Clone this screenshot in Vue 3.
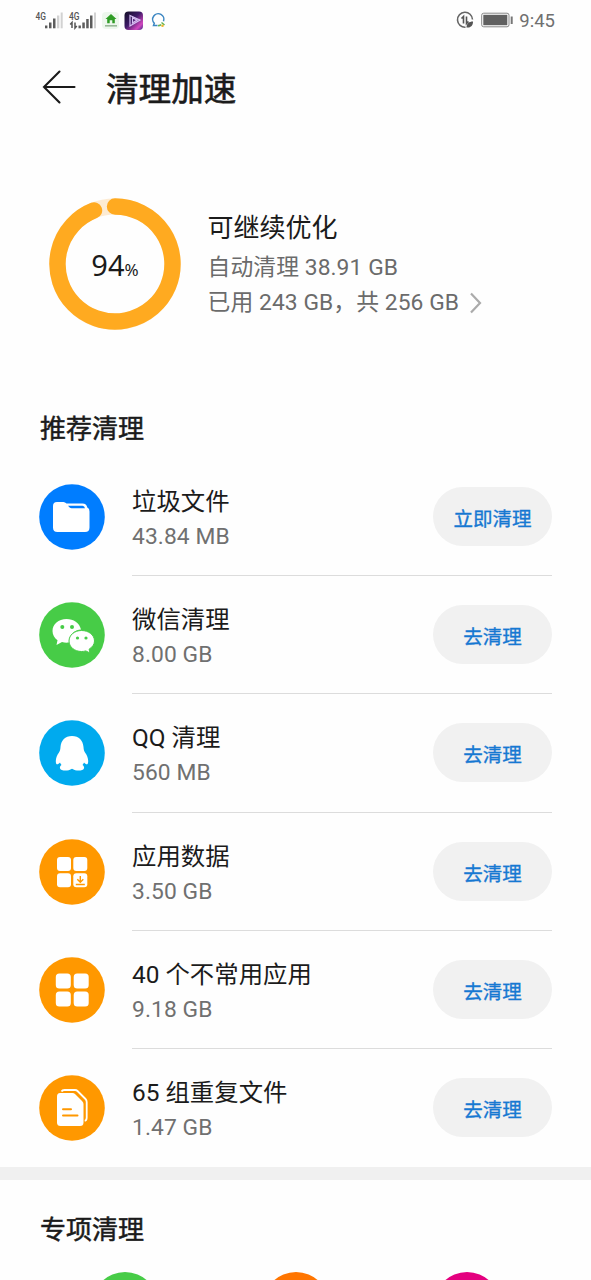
<script setup>
const rows = [
  { icon: 'folder', color: '#007dff', name: '垃圾文件', size: '43.84 MB', action: '立即清理' },
  { icon: 'wechat', color: '#47cc47', name: '微信清理', size: '8.00 GB', action: '去清理' },
  { icon: 'qq', color: '#00aaee', name: 'QQ 清理', size: '560 MB', action: '去清理' },
  { icon: 'data', color: '#ff9800', name: '应用数据', size: '3.50 GB', action: '去清理' },
  { icon: 'apps', color: '#ff9800', name: '40 个不常用应用', size: '9.18 GB', action: '去清理' },
  { icon: 'files', color: '#ff9800', name: '65 组重复文件', size: '1.47 GB', action: '去清理' },
]
const specials = ['green', 'orange', 'pink']
</script>

<template>
  <div class="page">
    <header class="status">
      <svg class="status-left" width="140" height="24" viewBox="0 0 140 24">
        <g class="net">
          <text x="0.500" y="10.500" textLength="10.500" lengthAdjust="spacingAndGlyphs">4G</text>
          <text x="34" y="10.500" textLength="10.500" lengthAdjust="spacingAndGlyphs">4G</text>
        </g>
        <g fill="#5c5c5c">
          <rect x="10" y="16.500" width="2.400" height="2.800" />
          <rect x="14" y="13.500" width="2.500" height="5.800" />
          <rect x="18" y="9.500" width="2.500" height="9.800" />
          <rect x="43.500" y="16.500" width="2.400" height="2.800" />
          <rect x="47.300" y="13.500" width="2.500" height="5.800" />
          <rect x="51.200" y="10" width="2.500" height="9.300" />
          <rect x="55" y="6.500" width="2.500" height="12.800" />
        </g>
        <g fill="#d2d2d2">
          <rect x="22" y="6.500" width="2.300" height="12.800" />
          <rect x="25.700" y="3.500" width="2" height="15.800" />
          <rect x="59" y="3.500" width="2" height="15.800" />
        </g>
        <path d="M37 19v-5.500l-1.800 2M40 13.500V19l1.800-2" fill="none" stroke="#555" stroke-width="1.500" />
        <rect x="67" y="3" width="17" height="17" rx="4" fill="#edf7ed" />
        <path d="M76 5l-5.500 5h1.700v4.300h2.500v-3h2.600v3h2.500v-4.300h1.700z" fill="#2f9c25" />
        <rect x="70" y="16" width="12" height="1.600" fill="#98b898" />
        <defs>
          <linearGradient id="media" x1="0" y1="0" x2="1" y2="1">
            <stop offset="0" stop-color="#120e24" />
            <stop offset="0.450" stop-color="#3c1a66" />
            <stop offset="0.800" stop-color="#d348c0" />
            <stop offset="1" stop-color="#3a2886" />
          </linearGradient>
        </defs>
        <rect x="89.500" y="2.500" width="18.500" height="18.500" rx="4" fill="url(#media)" />
        <path d="M95 6.500l10 4.500-10 6z M97.500 9v5l4.500-3z" fill="none" stroke="#d8c2f5" stroke-width="1.200" />
        <path d="M122.500 16.500h-4l.8-2.200a5.600 5.600 0 1 1 9.200-2" fill="none" stroke="#3b86c2" stroke-width="1.500" />
        <path d="M123 16.500q2 .5 3-1M126.500 13.500l3 2.500" fill="none" stroke="#63b551" stroke-width="1.500" />
        <circle cx="127.500" cy="16.800" r="1.300" fill="#efb52f" />
      </svg>
      <div class="status-right">
        <svg width="58" height="20" viewBox="0 0 58 20">
          <path d="M16.500 9.500A7.500 7.500 0 1 0 9.500 17.300" fill="none" stroke="#666" stroke-width="1.600" />
          <path d="M7.500 13.500V6.500l-2 2M10.500 6.500v7l2-2" fill="none" stroke="#555" stroke-width="1.600" />
          <path d="M10.500 17.500c0-4 2.500-6 6.500-6 .2 4-2.500 6.500-6.500 6z" fill="#555" />
          <rect x="25.700" y="3.200" width="27.300" height="13.600" rx="2" fill="none" stroke="#888" stroke-width="1" />
          <rect x="27.300" y="4.800" width="24" height="10.400" fill="#616161" />
          <rect x="54.700" y="6.500" width="2" height="7.500" fill="#777" />
        </svg>
        <span class="clock">9:45</span>
      </div>
    </header>

    <div class="titlebar">
      <svg width="36" height="36" viewBox="0 0 36 36">
        <path d="M33.500 18H3M18.500 2.500L3 18l15.500 15.500" fill="none" stroke="#1a1a1a" stroke-width="2.100" stroke-linecap="round" />
      </svg>
      <h1>清理加速</h1>
    </div>

    <section class="summary">
      <div class="ring">
        <svg width="132" height="132" viewBox="0 0 132 132">
          <circle cx="66" cy="66" r="57.500" fill="none" stroke="#fdebd2" stroke-width="16.200" />
          <path d="M66 8.500A57.500 57.500 0 1 1 45 12.470" fill="none" stroke="#ffaa20" stroke-width="16.400" stroke-linecap="round" />
        </svg>
        <div class="percent">94<small>%</small></div>
      </div>
      <div class="info">
        <h2>可继续优化</h2>
        <p>自动清理 38.91 GB</p>
        <p>
          <span>已用 243 GB，共 256 GB</span>
          <svg width="14" height="22" viewBox="0 0 14 22">
            <path d="M2 1.500l9 9.500-9 9.500" fill="none" stroke="#ababab" stroke-width="2.200" />
          </svg>
        </p>
      </div>
    </section>

    <h3 class="heading">推荐清理</h3>
    <ul class="rows">
      <li v-for="row in rows" :key="row.name">
        <svg class="badge" width="66" height="66" viewBox="0 0 66 66">
          <circle cx="33" cy="33" r="32.800" :fill="row.color" />
          <template v-if="row.icon === 'folder'">
            <path d="M18 18H24.500Q26 18 27.500 19.500H43.500Q47.500 19.500 48.300 23.500Q50.500 24.500 50.500 27.500V43.500Q50.500 48 46 48H18.500Q14 48 14 43.500V22Q14 18 18 18Z" fill="#fff" />
            <path d="M29 21.800H43.500Q45.500 21.800 46 24.300H32.500Q31 24.300 29 21.800Z" :fill="row.color" />
          </template>
          <template v-else-if="row.icon === 'wechat'">
            <path d="M27.500 17C19.500 17 13.500 22.200 13.500 29c0 4 2 7 5 9.200L17.500 43l5.500-3c2 .6 4.500.8 7 .5C30 32 36 28 42 27.500 40.500 21 34.500 17 27.500 17Z" fill="#fff" />
            <path d="M42.500 28.500c-7 0-12.500 4.600-12.500 10.500s5.500 10.500 12.500 10.500c1.500 0 3-.2 4.300-.6L51 51l-.9-3.800C53.500 45 55.500 42.300 55.500 39c0-6-5.800-10.500-13-10.500Z" fill="#fff" :stroke="row.color" stroke-width="1" />
            <g :fill="row.color">
              <circle cx="23.300" cy="25" r="2" /><circle cx="33" cy="25" r="2" />
              <circle cx="38.500" cy="36" r="1.600" /><circle cx="47" cy="36" r="1.600" />
            </g>
          </template>
          <path v-else-if="row.icon === 'qq'" d="M33 16C26 16 22 20.500 21.500 27c-.1 2-.5 4-1.500 5.500-2.500 3.500-3.700 7-3 10.500.3 2 2.300 1.500 4-.5.3.9.8 1.700 1.500 2.400-2.500 1.500-2.300 5.300 2 5.600 3.500.3 6-.3 8.500-1.800 2.500 1.500 5 2.100 8.500 1.800 4.300-.3 4.500-4.100 2-5.600.7-.7 1.200-1.500 1.500-2.400 1.700 2 3.700 2.500 4 .5.700-3.500-.5-7-3-10.500-1-1.500-1.400-3.500-1.500-5.500C44 20.500 40 16 33 16Z" fill="#fff" />
          <template v-else-if="row.icon === 'data'">
            <g fill="#fff">
              <rect x="18" y="18" width="14" height="14" rx="3" />
              <rect x="34.300" y="18" width="14" height="14" rx="3" />
              <rect x="18" y="34.300" width="14" height="14" rx="3" />
              <rect x="34.300" y="34.300" width="14" height="14" rx="3" />
            </g>
            <path d="M41.300 37v6M38.300 40.300l3 3 3-3M36.800 45.500h9" fill="none" :stroke="row.color" stroke-width="1.400" />
          </template>
          <g v-else-if="row.icon === 'apps'" fill="#fff">
            <rect x="16.800" y="16.500" width="15" height="15" rx="3.500" />
            <rect x="34.700" y="16.500" width="15" height="15" rx="3.500" />
            <rect x="16.800" y="34.500" width="15" height="15" rx="3.500" />
            <rect x="34.700" y="34.500" width="15" height="15" rx="3.500" />
          </g>
          <template v-else>
            <path d="M22.500 16.500q.8-1.500 3-1.500h10.500q1.500 0 2.500 1l8 8q1.200 1.200 1.200 3v15.500q0 3-2 3.300" fill="none" stroke="#fff" stroke-width="1.800" />
            <path d="M21 18H33.500Q35 18 36 19L43 26Q44.500 27.500 44.500 29V47.500Q44.500 51 41 51H21.500Q18 51 18 47.500V21.500Q18 18 21 18Z" fill="#fff" />
            <path d="M24 34.300h8M24 40.500h14.500" fill="none" :stroke="row.color" stroke-width="2" stroke-linecap="round" />
          </template>
        </svg>
        <div class="cell">
          <div class="label">
            <strong>{{ row.name }}</strong>
            <span>{{ row.size }}</span>
          </div>
          <button>{{ row.action }}</button>
        </div>
      </li>
    </ul>

    <div class="separator"></div>
    <h3 class="heading special">专项清理</h3>
    <div class="specials">
      <i v-for="tone in specials" :key="tone" :class="tone"></i>
    </div>
  </div>
</template>

<style>
body {
  margin: 0;
  background: #fff;
}
</style>

<style scoped>
.page {
  width: 591px;
  height: 1280px;
  overflow: hidden;
  background: #fefefe;
  color: #1b1b1b;
  font-family: Roboto, "Noto Sans CJK SC", sans-serif;
}
h1, h2, h3, p, ul {
  margin: 0;
  padding: 0;
}
.status {
  height: 42px;
  box-sizing: border-box;
  padding: 9px 36px 0 35px;
  display: flex;
  justify-content: space-between;
}
.net {
  font: 500 10.500px Roboto, sans-serif;
  fill: #555;
}
.status-right {
  display: flex;
  align-items: flex-start;
  gap: 5px;
  color: #707070;
}
.status-right svg {
  margin-top: 1px;
}
.clock {
  font-size: 18.500px;
  line-height: 25px;
}
.titlebar {
  height: 90px;
  padding-left: 41px;
  display: flex;
  align-items: center;
  gap: 29px;
}
h1 {
  padding-top: 6px;
  font-size: 32.600px;
  line-height: 48px;
  font-weight: 400;
  -webkit-text-stroke: 0.600px currentColor;
}
.summary {
  height: 264px;
  box-sizing: border-box;
  padding: 66px 0 0 49px;
  display: flex;
  gap: 26.500px;
}
.ring {
  width: 132px;
  height: 132px;
  display: grid;
}
.ring > * {
  grid-area: 1 / 1;
}
.percent {
  align-self: center;
  text-align: center;
  font: 29px "Noto Sans", sans-serif;
}
.percent small {
  font-size: 17px;
}
.info {
  padding-top: 10px;
}
h2 {
  height: 42px;
  font-size: 26px;
  line-height: 41px;
  font-weight: 400;
}
.info p {
  display: flex;
  align-items: center;
  gap: 10px;
  font-size: 22.800px;
  line-height: 35px;
  letter-spacing: 0.080px;
  color: #6b6b6b;
}
.heading {
  height: 62px;
  padding-left: 40px;
  font-size: 26px;
  line-height: 67px;
  font-weight: 400;
  -webkit-text-stroke: 0.500px currentColor;
}
.rows {
  list-style: none;
}
.rows li {
  height: 118.200px;
  padding: 0 39px;
  display: flex;
  align-items: center;
  gap: 27px;
}
.badge {
  flex: none;
}
.cell {
  flex: 1;
  height: 100%;
  box-sizing: border-box;
  border-bottom: 1px solid #dcdcdc;
  display: flex;
  align-items: center;
  justify-content: space-between;
}
li:last-child .cell {
  border-color: transparent;
}
.label {
  display: grid;
  padding-top: 5px;
}
.label strong {
  font-size: 24.400px;
  line-height: 36px;
  font-weight: 400;
}
.label span {
  font-size: 22.800px;
  line-height: 34px;
  letter-spacing: 0.100px;
  color: #707070;
}
button {
  width: 119px;
  height: 59px;
  padding: 2px 0 0;
  border: 0;
  border-radius: 30px;
  background: #f1f1f1;
  color: #1678d2;
  font: 400 19.500px Roboto, "Noto Sans CJK SC", sans-serif;
  -webkit-text-stroke: 0.350px currentColor;
}
.separator {
  height: 13px;
  background: #f0f0f0;
}
.special {
  height: 91.800px;
  line-height: 101px;
}
.specials {
  display: flex;
  padding-left: 92px;
  gap: 105px;
}
.specials i {
  width: 66px;
  height: 66px;
  border-radius: 50%;
}
.green {
  background: #47cc47;
}
.orange {
  background: #ff7500;
}
.pink {
  background: #e4007f;
}
</style>
